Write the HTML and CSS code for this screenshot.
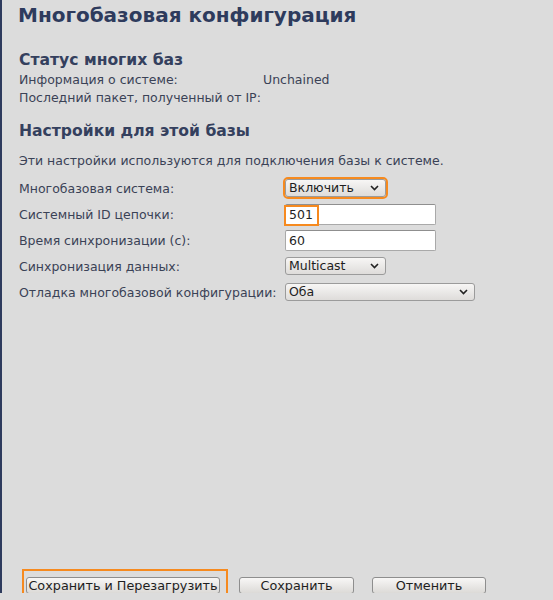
FILE: index.html
```html
<!DOCTYPE html>
<html lang="ru">
<head>
<meta charset="utf-8">
<title>Многобазовая конфигурация</title>
<link rel="stylesheet" href="styles.css">
</head>
<body>
<div class="page">
  <h1 class="title">Многобазовая конфигурация</h1>

  <h2 class="section section-status">Статус многих баз</h2>
  <div class="status">
    <span class="label">Информация о системе:</span><span class="value">Unchained</span>
    <span class="label">Последний пакет, полученный от IP:</span><span class="value"></span>
  </div>

  <h2 class="section section-settings">Настройки для этой базы</h2>
  <p class="desc">Эти настройки используются для подключения базы к системе.</p>

  <div class="form">
    <div class="row">
      <span class="label">Многобазовая система:</span>
      <div class="select select-mode highlight">
        <select><option>Включить</option></select>
        <svg class="chev" width="9" height="6" viewBox="0 0 9 6"><polyline points="1,1 4.5,4.5 8,1" fill="none" stroke="#222" stroke-width="1.6"/></svg>
      </div>
    </div>
    <div class="row">
      <span class="label">Системный ID цепочки:</span>
      <div class="field">
        <input class="text" type="text" value="501">
        <span class="mark mark-id"></span>
      </div>
    </div>
    <div class="row">
      <span class="label">Время синхронизации (с):</span>
      <div class="field">
        <input class="text" type="text" value="60">
      </div>
    </div>
    <div class="row">
      <span class="label">Синхронизация данных:</span>
      <div class="select select-sync">
        <select><option>Multicast</option></select>
        <svg class="chev" width="9" height="6" viewBox="0 0 9 6"><polyline points="1,1 4.5,4.5 8,1" fill="none" stroke="#222" stroke-width="1.6"/></svg>
      </div>
    </div>
    <div class="row">
      <span class="label">Отладка многобазовой конфигурации:</span>
      <div class="select select-debug">
        <select><option>Оба</option></select>
        <svg class="chev" width="9" height="6" viewBox="0 0 9 6"><polyline points="1,1 4.5,4.5 8,1" fill="none" stroke="#222" stroke-width="1.6"/></svg>
      </div>
    </div>
  </div>

  <div class="actions">
    <div class="btn-wrap">
      <button class="btn btn-wide">Сохранить и Перезагрузить</button>
      <span class="mark mark-btn"></span>
    </div>
    <button class="btn">Сохранить</button>
    <button class="btn">Отменить</button>
  </div>
</div>
</body>
</html>
```
FILE: styles.css
```css
* { box-sizing: border-box; }

html, body {
  margin: 0;
  padding: 0;
  background: #dcdcdc;
  font-family: "DejaVu Sans", Verdana, sans-serif;
  overflow: hidden;
}

.page {
  height: 593px;
  border-left: 2px solid #2e3b5d;
  padding: 3px 0 0 16px;
  display: flex;
  flex-direction: column;
}

.title {
  margin: 0;
  font-size: 20px;
  line-height: 24px;
  font-weight: bold;
  color: #2e3b5d;
}

.section {
  margin: 23px 0 0 1px;
  font-size: 15.6px;
  line-height: 20px;
  font-weight: bold;
  color: #34405e;
}

.section-settings { margin-top: 14px; }

.status {
  margin-top: 1px;
  display: grid;
  grid-template-columns: 245px auto;
  font-size: 12.5px;
  line-height: 18px;
  color: #3a4256;
}

.label { padding-left: 1px; }

.desc {
  margin: 11px 0 0 1px;
  font-size: 12.5px;
  line-height: 18px;
  color: #3a4256;
}

.form {
  margin-top: 5px;
  display: flex;
  flex-direction: column;
  font-size: 12.5px;
  color: #3a4256;
}

.row {
  height: 26px;
  display: grid;
  grid-template-columns: 267px auto;
  align-items: center;
}

.select {
  position: relative;
  height: 18px;
}

.select select {
  -webkit-appearance: none;
  appearance: none;
  width: 100%;
  height: 18px;
  margin: 0;
  padding: 0 0 0 3px;
  border: 1px solid #9b9b9b;
  border-radius: 3px;
  background: linear-gradient(#f7f6f5, #dedcda);
  font-family: "DejaVu Sans", Verdana, sans-serif;
  font-size: 12.5px;
  line-height: 16px;
  color: #1e1e1e;
}

.chev {
  position: absolute;
  right: 7px;
  top: 6px;
}

.select-mode { width: 101px; }
.select-sync { width: 101px; }
.select-debug { width: 190px; }

.highlight select {
  outline: 2px solid #f68a1f;
  outline-offset: 0;
}

.field {
  position: relative;
  width: 151px;
  height: 21px;
}

.text {
  width: 100%;
  height: 21px;
  margin: 0;
  padding: 0 0 0 3px;
  border: 1px solid #a9a9a9;
  border-top-color: #8f8f8f;
  border-radius: 2px;
  background: #fff;
  font-family: "DejaVu Sans", Verdana, sans-serif;
  font-size: 12.5px;
  color: #1e1e1e;
}

.mark {
  position: absolute;
  border: 2px solid #f68a1f;
  pointer-events: none;
}

.mark-id {
  left: -1px;
  top: 1px;
  width: 35px;
  height: 21px;
}

.actions {
  margin: auto 0 -1px 8px;
  display: flex;
  align-items: flex-start;
  height: 17px;
}

.btn-wrap { position: relative; }

.btn {
  height: 17px;
  margin: 0 0 0 19px;
  padding: 0;
  width: 115px;
  border: 1px solid #8e8e8e;
  border-radius: 3px;
  background: linear-gradient(#f8f7f6, #dcdad7);
  font-family: "DejaVu Sans", Verdana, sans-serif;
  font-size: 12.8px;
  line-height: 15px;
  color: #1e1e1e;
}

.btn-wrap .btn-wide {
  margin: 0;
  width: 194px;
  display: block;
}

.btn:last-child { margin-left: 18px; width: 114px; }

.mark-btn {
  left: -4px;
  top: -8px;
  width: 206px;
  height: 40px;
}
```
